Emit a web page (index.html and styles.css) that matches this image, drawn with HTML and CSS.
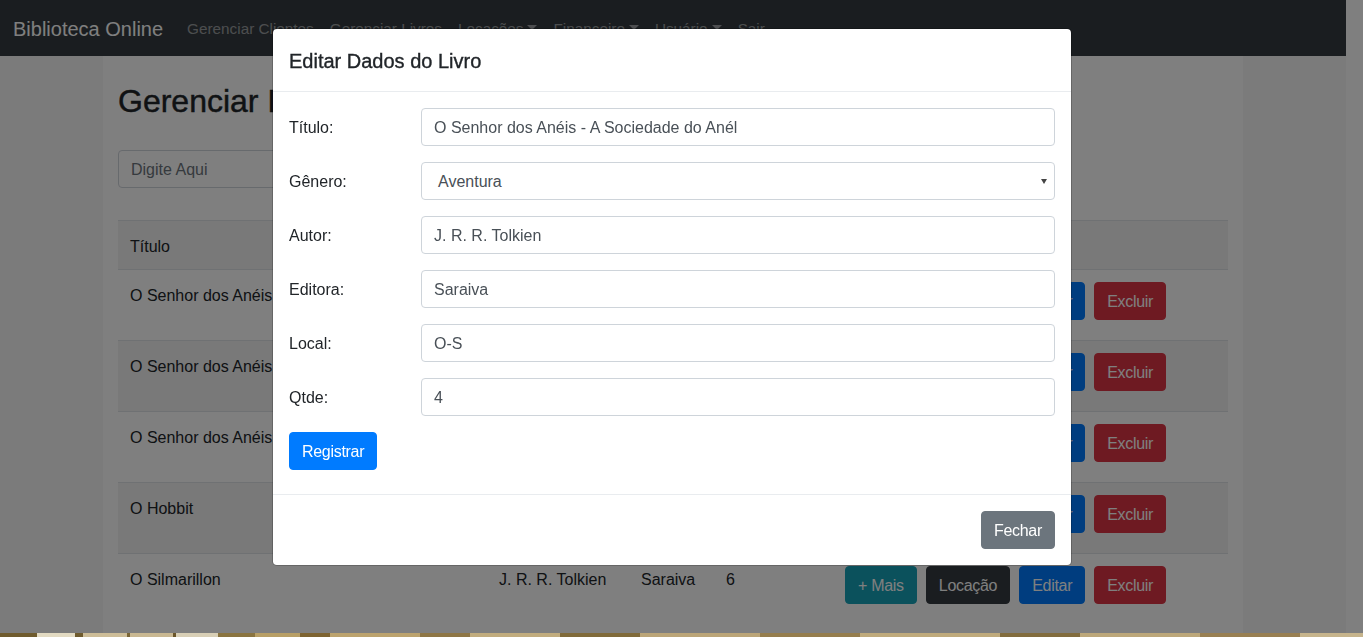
FILE: index.html
```html
<!DOCTYPE html>
<html lang="pt-BR">
<head>
<meta charset="utf-8">
<title>Biblioteca Online</title>
<link rel="stylesheet" href="styles.css">
</head>
<body>
<div class="page">
  <nav class="navbar">
    <a class="brand" href="#">Biblioteca Online</a>
    <ul class="nav">
      <li><a class="nav-link" href="#">Gerenciar Clientes</a></li>
      <li><a class="nav-link" href="#">Gerenciar Livros</a></li>
      <li><a class="nav-link caret" href="#">Locações</a></li>
      <li><a class="nav-link caret" href="#">Financeiro</a></li>
      <li><a class="nav-link caret" href="#">Usuário</a></li>
      <li><a class="nav-link" href="#">Sair</a></li>
    </ul>
  </nav>
  <main class="container">
    <h2 class="page-title">Gerenciar Livros</h2>
    <form class="search">
      <input class="form-control search-input" type="text" placeholder="Digite Aqui">
    </form>
    <table class="table">
      <colgroup>
        <col class="c-title"><col class="c-author"><col class="c-pub"><col class="c-qty"><col class="c-act">
      </colgroup>
      <tbody>
        <tr class="striped head"><th>Título</th><th>Autor</th><th>Editora</th><th>Qtde</th><th></th></tr>
        <tr>
          <td>O Senhor dos Anéis</td><td>J. R. R. Tolkien</td><td>Saraiva</td><td>4</td>
          <td class="act"><div class="actions"><span class="btn btn-info">+ Mais</span><span class="btn btn-dark">Locação</span><span class="btn btn-primary">Editar</span><span class="btn btn-danger">Excluir</span></div></td>
        </tr>
        <tr class="striped">
          <td>O Senhor dos Anéis</td><td>J. R. R. Tolkien</td><td>Saraiva</td><td>3</td>
          <td class="act"><div class="actions"><span class="btn btn-info">+ Mais</span><span class="btn btn-dark">Locação</span><span class="btn btn-primary">Editar</span><span class="btn btn-danger">Excluir</span></div></td>
        </tr>
        <tr>
          <td>O Senhor dos Anéis</td><td>J. R. R. Tolkien</td><td>Saraiva</td><td>5</td>
          <td class="act"><div class="actions"><span class="btn btn-info">+ Mais</span><span class="btn btn-dark">Locação</span><span class="btn btn-primary">Editar</span><span class="btn btn-danger">Excluir</span></div></td>
        </tr>
        <tr class="striped">
          <td>O Hobbit</td><td>J. R. R. Tolkien</td><td>Saraiva</td><td>2</td>
          <td class="act"><div class="actions"><span class="btn btn-info">+ Mais</span><span class="btn btn-dark">Locação</span><span class="btn btn-primary">Editar</span><span class="btn btn-danger">Excluir</span></div></td>
        </tr>
        <tr>
          <td>O Silmarillon</td><td>J. R. R. Tolkien</td><td>Saraiva</td><td>6</td>
          <td class="act"><div class="actions"><span class="btn btn-info">+ Mais</span><span class="btn btn-dark">Locação</span><span class="btn btn-primary">Editar</span><span class="btn btn-danger">Excluir</span></div></td>
        </tr>
      </tbody>
    </table>
  </main>
  <div class="footer-strip"></div>
</div>

<div class="backdrop"></div>

<div class="modal">
  <div class="modal-dialog">
    <div class="modal-header">
      <h5 class="modal-title">Editar Dados do Livro</h5>
    </div>
    <div class="modal-body">
      <div class="form-row"><label class="col-label">Título:</label><input class="form-control" type="text" value="O Senhor dos Anéis - A Sociedade do Anél"></div>
      <div class="form-row"><label class="col-label">Gênero:</label>
        <div class="select-wrap"><div class="form-control select">Aventura</div></div>
      </div>
      <div class="form-row"><label class="col-label">Autor:</label><input class="form-control" type="text" value="J. R. R. Tolkien"></div>
      <div class="form-row"><label class="col-label">Editora:</label><input class="form-control" type="text" value="Saraiva"></div>
      <div class="form-row"><label class="col-label">Local:</label><input class="form-control" type="text" value="O-S"></div>
      <div class="form-row"><label class="col-label">Qtde:</label><input class="form-control" type="text" value="4"></div>
      <div class="submit-row"><span class="btn btn-primary">Registrar</span></div>
    </div>
    <div class="modal-footer">
      <span class="btn btn-secondary">Fechar</span>
    </div>
  </div>
</div>
</body>
</html>
```
FILE: styles.css
```css
* { box-sizing: border-box; }
html { background: #fff; }
body {
  margin: 0;
  background: #fff;
  font-family: "Liberation Sans", Arial, sans-serif;
  font-size: 16px;
  line-height: 24px;
  color: #212529;
  overflow: hidden;
  height: 637px;
}
.page {
  margin-right: 17px;
  background: #f6f6f6;
}
.navbar {
  display: flex;
  align-items: center;
  height: 56px;
  padding: 8px 16px 8px 13px;
  background: #343a40;
}
.brand {
  color: #fff;
  font-size: 20px;
  line-height: 30px;
  padding: 6px 0 4px;
  margin-right: 16px;
  text-decoration: none;
}
.nav {
  display: flex;
  list-style: none;
  margin: 0;
  padding: 0;
}
.nav-link {
  display: block;
  padding: 9px 8px 7px;
  color: rgba(255,255,255,.5);
  text-decoration: none;
  font-size: 15.3px;
}
.caret::after {
  content: "";
  display: inline-block;
  margin-left: 4px;
  vertical-align: 4px;
  border-top: 5px solid;
  border-left: 5px solid transparent;
  border-right: 5px solid transparent;
}
.container {
  width: 1140px;
  margin: 0 auto;
  padding: 26px 15px 0;
  background: #fff;
  height: 577px;
}
.page-title {
  margin: 0 0 30px;
  font-size: 32px;
  line-height: 38px;
  font-weight: 400;
  -webkit-text-stroke: 0.45px #212529;
}
.search { margin: 0 0 32px; }
.form-control {
  display: block;
  width: 100%;
  height: 38px;
  padding: 7px 12px 5px;
  font-family: inherit;
  font-size: 16px;
  line-height: 24px;
  color: #495057;
  background: #fff;
  border: 1px solid #ced4da;
  border-radius: 4px;
}
.form-control::placeholder { color: #6c757d; }
.search-input { width: 420px; }
.table {
  width: 1110px;
  border-collapse: collapse;
  table-layout: fixed;
}
.c-title { width: 369px; }
.c-author { width: 142px; }
.c-pub { width: 85px; }
.c-qty { width: 119px; }
.c-act { width: 395px; }
.table th, .table td {
  padding: 14px 12px 10px;
  text-align: left;
  vertical-align: top;
  border-top: 1px solid #dee2e6;
  font-weight: 400;
  white-space: nowrap;
  overflow: hidden;
}
.table td.act { padding: 12px; }
.striped { background: rgba(0,0,0,.05); }
.actions {
  display: flex;
  gap: 9px;
  height: 46px;
  align-items: flex-start;
}
.btn {
  display: inline-block;
  padding: 7px 12px 5px;
  border: 1px solid transparent;
  border-radius: 4px;
  font-size: 16px;
  line-height: 24px;
  color: #fff;
  white-space: nowrap;
  letter-spacing: -0.3px;
}
.btn-info { background: #17a2b8; border-color: #17a2b8; }
.btn-dark { background: #343a40; border-color: #343a40; }
.btn-primary { background: #007bff; border-color: #007bff; }
.btn-danger { background: #dc3545; border-color: #dc3545; }
.btn-secondary { background: #6c757d; border-color: #6c757d; }
.footer-strip {
  position: relative;
  z-index: 1060;
  height: 4px;
  margin-right: -17px;
  background: linear-gradient(90deg,
    #6f5b2e 0 37px, #e2dac2 37px 75px, #6f5b2e 75px 83px, #cdbd98 83px 127px,
    #7a6535 127px 130px, #c9b892 130px 173px, #6a552a 173px 176px, #d8cfb6 176px 218px,
    #8a7440 218px 255px, #b89f66 255px 300px, #7d6331 300px 330px, #bca36e 330px 420px,
    #8e7646 420px 470px, #c1ac7e 470px 560px, #806a3a 560px 640px, #bba578 640px 760px,
    #957d4e 760px 860px, #bfaa7c 860px 1000px, #826c3e 1000px 1080px, #bca77a 1080px 1200px,
    #987f52 1200px 1300px, #c6b48c 1300px 1363px);
}
.backdrop {
  position: fixed;
  inset: 0;
  z-index: 1040;
  background: rgba(0,0,0,.5);
}
.modal {
  position: fixed;
  top: 0;
  left: 0;
  right: 17px;
  bottom: 0;
  z-index: 1050;
}
.modal-dialog {
  width: 800px;
  margin: 28px auto 0;
  background: #fff;
  border: 1px solid rgba(0,0,0,.2);
  border-radius: 4.8px;
  background-clip: padding-box;
  transform: translateX(-1px);
}
.modal-header {
  padding: 17px 16px 15px;
  border-bottom: 1px solid #e9ecef;
}
.modal-title {
  margin: 0;
  font-size: 20px;
  line-height: 30px;
  font-weight: 400;
  -webkit-text-stroke: 0.35px #212529;
}
.modal-body { padding: 16px 16px 24px 16px; }
.form-row {
  display: grid;
  grid-template-columns: 132px 1fr;
  margin-bottom: 16px;
}
.col-label {
  padding-top: 8px;
  padding-bottom: 6px;
  line-height: 24px;
}
.select-wrap { position: relative; }
.select { padding-left: 16px; }
.select-wrap::after {
  content: "";
  position: absolute;
  right: 8px;
  top: 17px;
  border-top: 5px solid #444;
  border-left: 3.5px solid transparent;
  border-right: 3.5px solid transparent;
}
.submit-row { display: flex; }
.modal-footer {
  display: flex;
  justify-content: flex-end;
  padding: 16px;
  border-top: 1px solid #e9ecef;
}
```
